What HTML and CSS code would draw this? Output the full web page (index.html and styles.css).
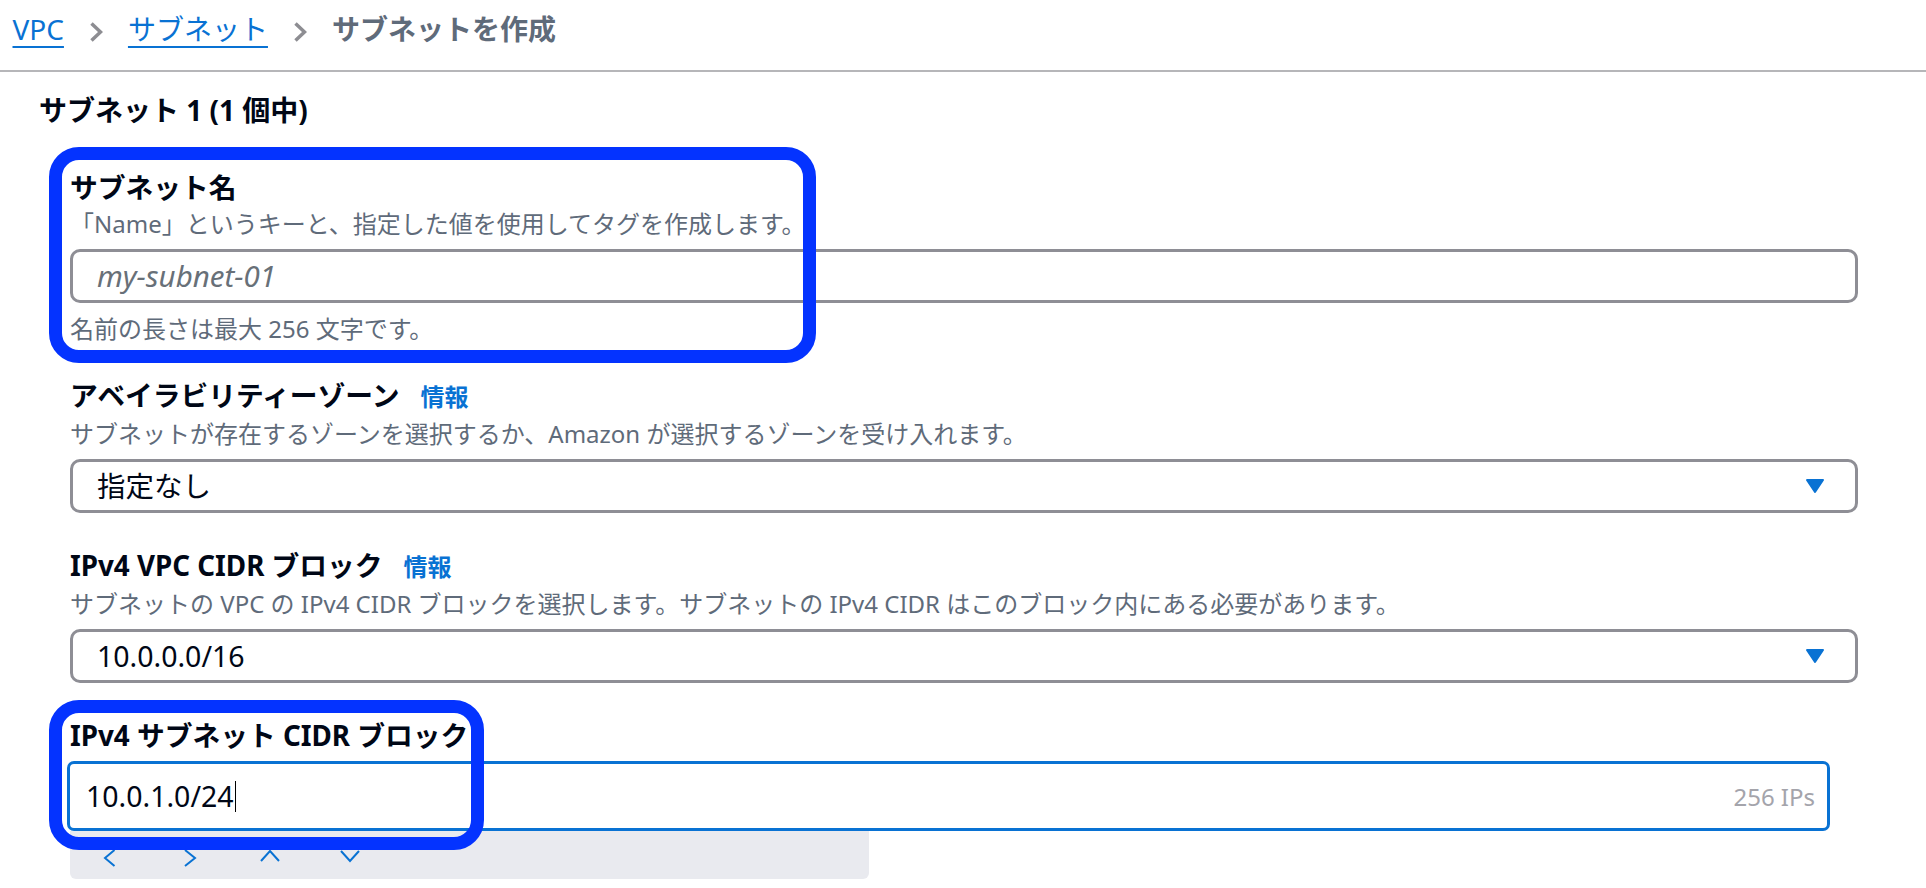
FILE: index.html
```html
<!DOCTYPE html>
<html lang="ja">
<head>
    <meta charset="UTF-8">
    <meta name="viewport" content="width=device-width, initial-scale=1.0">
    <title>サブネットを作成</title>
    <link rel="stylesheet" href="styles.css">
</head>
<body>

    <nav class="breadcrumbs">
        <a href="#" class="crumb-link">VPC</a>
        <svg class="crumb-sep" width="14" height="20" viewBox="0 0 14 20"><path d="M2.5 1.5 L11.5 10 L2.5 18.5"/></svg>
        <a href="#" class="crumb-link">サブネット</a>
        <svg class="crumb-sep" width="14" height="20" viewBox="0 0 14 20"><path d="M2.5 1.5 L11.5 10 L2.5 18.5"/></svg>
        <span class="crumb-current">サブネットを作成</span>
    </nav>

    <main class="content">
        <h2 class="subnet-title">サブネット 1 (1 個中)</h2>

        <div class="fields">
            <div class="field field-name">
                <div class="field-label-row"><label for="subnetName">サブネット名</label></div>
                <div class="field-desc">「Name」というキーと、指定した値を使用してタグを作成します。</div>
                <input type="text" id="subnetName" class="text-input" placeholder="my-subnet-01">
                <div class="field-hint">名前の長さは最大 256 文字です。</div>
                <div class="mark mark-name"></div>
            </div>

            <div class="field">
                <div class="field-label-row"><label for="azSelect">アベイラビリティーゾーン</label><a href="#" class="info-link">情報</a></div>
                <div class="field-desc">サブネットが存在するゾーンを選択するか、Amazon が選択するゾーンを受け入れます。</div>
                <div class="select-wrap">
                    <select id="azSelect" class="select">
                        <option>指定なし</option>
                    </select>
                    <svg class="select-arrow" width="20" height="16" viewBox="0 0 20 16"><path d="M2 2 H18 L10 14 Z"/></svg>
                </div>
            </div>

            <div class="field">
                <div class="field-label-row"><label for="vpcCidr">IPv4 VPC CIDR ブロック</label><a href="#" class="info-link">情報</a></div>
                <div class="field-desc">サブネットの VPC の IPv4 CIDR ブロックを選択します。サブネットの IPv4 CIDR はこのブロック内にある必要があります。</div>
                <div class="select-wrap">
                    <select id="vpcCidr" class="select">
                        <option>10.0.0.0/16</option>
                    </select>
                    <svg class="select-arrow" width="20" height="16" viewBox="0 0 20 16"><path d="M2 2 H18 L10 14 Z"/></svg>
                </div>
            </div>

            <div class="field field-cidr">
                <div class="field-label-row"><label>IPv4 サブネット CIDR ブロック</label></div>
                <div class="cidr-input">
                    <span class="cidr-value">10.0.1.0/24</span><span class="caret"></span>
                    <span class="cidr-count">256 IPs</span>
                </div>
                <div class="cidr-stepper">
                    <svg width="20" height="20" viewBox="0 0 20 20"><path d="M14.5 3 L5 11 L14.5 19"/></svg>
                    <svg width="20" height="20" viewBox="0 0 20 20"><path d="M5 3 L15 11 L5 19"/></svg>
                    <svg width="20" height="20" viewBox="0 0 20 20"><path d="M1 14 L10 4 L19 14"/></svg>
                    <svg width="20" height="20" viewBox="0 0 20 20"><path d="M1 4 L10 14 L19 4"/></svg>
                </div>
                <div class="mark mark-cidr"></div>
            </div>
        </div>
    </main>

</body>
</html>
```

FILE: styles.css
```css
body {
    margin: 0;
    font-family: "Noto Sans", "Noto Sans CJK JP", sans-serif;
    color: #000716;
    background: #fff;
}

/* breadcrumbs */
.breadcrumbs {
    display: flex;
    align-items: flex-start;
    height: 72px;
    box-sizing: border-box;
    padding: 10px 12px 0 12.5px;
    border-bottom: 2px solid #b6b6b9;
}
.crumb-link, .crumb-current {
    font-size: 28px;
    line-height: 38px;
}
.crumb-link {
    color: #0972d3;
    text-decoration: underline;
    text-decoration-thickness: 2px;
    text-underline-offset: 6px;
}
.crumb-current {
    font-weight: 700;
    color: #5f6b7a;
}
.crumb-sep {
    margin: 12px 25px 0;
}
.crumb-sep path {
    fill: none;
    stroke: #8d8d92;
    stroke-width: 3.5;
}

/* form */
.content {
    padding: 0 68px 0 39px;
}
.subnet-title {
    margin: 19px 0 0;
    font-size: 28px;
    line-height: 38px;
    font-weight: 700;
}
.fields {
    margin-top: 39px;
    padding-left: 31px;
}
.field {
    position: relative;
    margin-bottom: 33px;
}
.field-name {
    margin-bottom: 30px;
}
.field-label-row {
    font-size: 27.75px;
    line-height: 38px;
    font-weight: 700;
}
.info-link {
    margin-left: 21px;
    font-size: 24px;
    color: #0972d3;
    text-decoration: none;
}
.field-desc, .field-hint {
    font-size: 24px;
    line-height: 35px;
    color: #5f6b7a;
}
.field-hint {
    margin-top: 8px;
}

.text-input, .select {
    display: block;
    width: 100%;
    height: 54px;
    box-sizing: border-box;
    margin: 8px 0 0;
    padding: 0 60px 0 24px;
    border: 3px solid #8e8e95;
    border-radius: 10px;
    background: #fff;
    font-family: inherit;
    font-size: 28.5px;
    color: #000716;
    outline: none;
    -webkit-appearance: none;
    appearance: none;
}
.text-input::placeholder {
    color: #687078;
    font-style: italic;
    font-size: 29.5px;
}
.select-wrap {
    position: relative;
}
.select-arrow {
    position: absolute;
    right: 33px;
    top: 19px;
}
.select-arrow path {
    fill: #0972d3;
    stroke: #0972d3;
    stroke-width: 2;
    stroke-linejoin: round;
}

.cidr-input {
    display: flex;
    align-items: center;
    height: 70px;
    box-sizing: border-box;
    margin: 7px 28px 0 -3px;
    padding: 0 12px 0 16px;
    border: 3px solid #0972d3;
    border-radius: 7px;
    font-size: 28.5px;
}
.caret {
    display: inline-block;
    width: 1.5px;
    height: 31px;
    margin-left: 1px;
    background: #000;
}
.cidr-count {
    margin-left: auto;
    font-size: 24px;
    color: #a4a4ab;
}
.cidr-stepper {
    display: flex;
    gap: 60px;
    width: 799px;
    height: 48px;
    box-sizing: border-box;
    padding: 16px 0 0 30px;
    background: #e9eaef;
    border-radius: 0 0 6px 6px;
}
.cidr-stepper path {
    fill: none;
    stroke: #0972d3;
    stroke-width: 2;
}

/* annotation rectangles */
.mark {
    position: absolute;
    left: -21px;
    box-sizing: border-box;
    border: 13px solid #0433ff;
    border-radius: 30px;
    pointer-events: none;
}
.mark-name {
    top: -21px;
    width: 767px;
    height: 216px;
}
.mark-cidr {
    top: -16px;
    width: 435px;
    height: 150px;
}
```
